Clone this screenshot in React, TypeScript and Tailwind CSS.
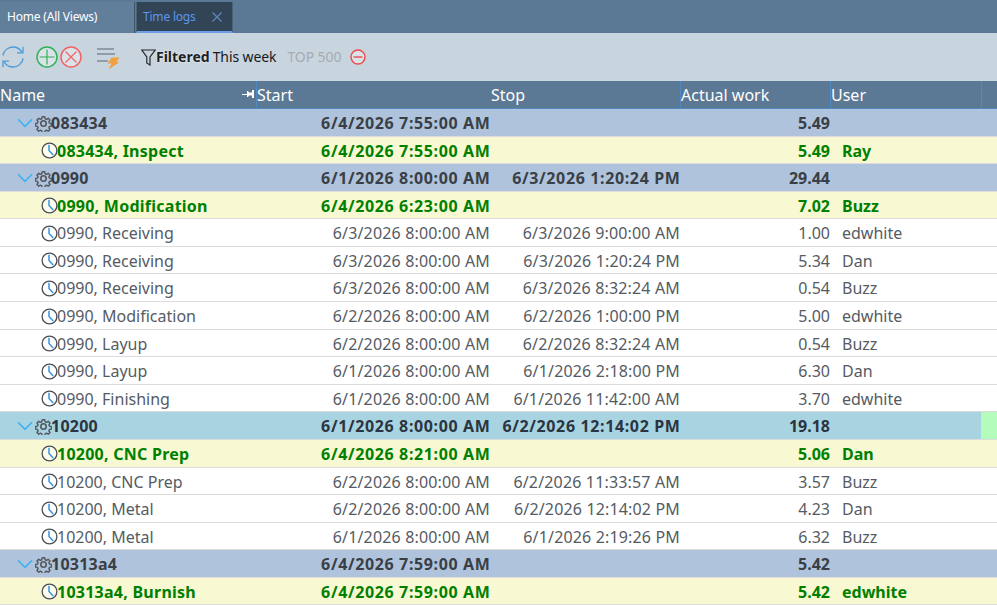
type RowKind = "group" | "groupActive" | "active" | "plain";

interface Row {
  kind: RowKind;
  name: string;
  start: string;
  stop?: string;
  work: string;
  user?: string;
}

const rows: Row[] = [
  { kind: "group", name: "083434", start: "6/4/2026 7:55:00 AM", work: "5.49" },
  { kind: "active", name: "083434, Inspect", start: "6/4/2026 7:55:00 AM", work: "5.49", user: "Ray" },
  { kind: "group", name: "0990", start: "6/1/2026 8:00:00 AM", stop: "6/3/2026 1:20:24 PM", work: "29.44" },
  { kind: "active", name: "0990, Modification", start: "6/4/2026 6:23:00 AM", work: "7.02", user: "Buzz" },
  { kind: "plain", name: "0990, Receiving", start: "6/3/2026 8:00:00 AM", stop: "6/3/2026 9:00:00 AM", work: "1.00", user: "edwhite" },
  { kind: "plain", name: "0990, Receiving", start: "6/3/2026 8:00:00 AM", stop: "6/3/2026 1:20:24 PM", work: "5.34", user: "Dan" },
  { kind: "plain", name: "0990, Receiving", start: "6/3/2026 8:00:00 AM", stop: "6/3/2026 8:32:24 AM", work: "0.54", user: "Buzz" },
  { kind: "plain", name: "0990, Modification", start: "6/2/2026 8:00:00 AM", stop: "6/2/2026 1:00:00 PM", work: "5.00", user: "edwhite" },
  { kind: "plain", name: "0990, Layup", start: "6/2/2026 8:00:00 AM", stop: "6/2/2026 8:32:24 AM", work: "0.54", user: "Buzz" },
  { kind: "plain", name: "0990, Layup", start: "6/1/2026 8:00:00 AM", stop: "6/1/2026 2:18:00 PM", work: "6.30", user: "Dan" },
  { kind: "plain", name: "0990, Finishing", start: "6/1/2026 8:00:00 AM", stop: "6/1/2026 11:42:00 AM", work: "3.70", user: "edwhite" },
  { kind: "groupActive", name: "10200", start: "6/1/2026 8:00:00 AM", stop: "6/2/2026 12:14:02 PM", work: "19.18" },
  { kind: "active", name: "10200, CNC Prep", start: "6/4/2026 8:21:00 AM", work: "5.06", user: "Dan" },
  { kind: "plain", name: "10200, CNC Prep", start: "6/2/2026 8:00:00 AM", stop: "6/2/2026 11:33:57 AM", work: "3.57", user: "Buzz" },
  { kind: "plain", name: "10200, Metal", start: "6/2/2026 8:00:00 AM", stop: "6/2/2026 12:14:02 PM", work: "4.23", user: "Dan" },
  { kind: "plain", name: "10200, Metal", start: "6/1/2026 8:00:00 AM", stop: "6/1/2026 2:19:26 PM", work: "6.32", user: "Buzz" },
  { kind: "group", name: "10313a4", start: "6/4/2026 7:59:00 AM", work: "5.42" },
  { kind: "active", name: "10313a4, Burnish", start: "6/4/2026 7:59:00 AM", work: "5.42", user: "edwhite" },
];

const rowStyles: Record<RowKind, string> = {
  group: "bg-[#afc3dd] text-[#3a3f46] font-bold",
  groupActive: "bg-[#a8d4e2] text-[#2b3440] font-bold",
  active: "bg-[#f8f9d2] text-[#008000] font-bold",
  plain: "bg-white text-[#555b63]",
};

const ClockIcon = () => (
  <svg className="h-[17px] w-[17px] shrink-0" viewBox="0 0 17 17" fill="none">
    <circle cx="8.5" cy="8.500" r="7.4" fill="#ffffff" fillOpacity="0.6" stroke="#4a4f57" strokeWidth="1.3" />
    <path d="M8 2.800V8.500L12.200 13" stroke="#3a94dc" strokeWidth="1.5" />
  </svg>
);

const GearIcon = () => (
  <svg className="h-[17px] w-[17px] shrink-0" viewBox="0 0 24 24" fill="none" stroke="#55585d" strokeWidth="2.3" strokeLinejoin="round">
    <circle cx="12" cy="12" r="3.8" />
    <path d="M10 2h4l.6 3 2.300 1 2.600-1.700 2.800 2.800-1.700 2.600 1 2.300 3 .6v4l-3 .6-1 2.300 1.700 2.600-2.800 2.800-2.600-1.700-2.300 1-.6 3h-4l-.6-3-2.300-1-2.600 1.700-2.800-2.800 1.700-2.600-1-2.300-3-.6v-4l3-.6 1-2.300-1.700-2.600 2.800-2.800 2.600 1.700 2.300-1z" transform="translate(1.300 .8) scale(.89)" />
  </svg>
);

const Chevron = () => (
  <svg className="h-[10px] w-[16px] shrink-0" viewBox="0 0 16 10" fill="none">
    <path d="M1 1.200 8 8.400 15 1.200" stroke="#3db2ee" strokeWidth="1.6" />
  </svg>
);

const RefreshIcon = () => (
  <svg className="ml-[2px] h-[22px] w-[22px]" viewBox="0 0 22 22" fill="none" stroke="#4a9bd8" strokeWidth="1.3">
    <path d="M.8 9.500C1.800 4.500 6 1 11 1c4 0 7 2.200 9 5.200" />
    <path d="M21 .8v6h-6" />
    <path d="M21.200 12.500C20.200 17.500 16 21 11 21c-4 0-7-2.200-9-5.200" />
    <path d="M1 21.200v-6h6" />
  </svg>
);

const CircleAction = ({ color, kind }: { color: string; kind: "plus" | "cross" }) => (
  <svg className="h-[22px] w-[22px]" viewBox="0 0 22 22" fill="none" stroke={color}>
    <circle cx="11" cy="11" r="10" fill="#ffffff" fillOpacity="0.35" strokeWidth="1.5" />
    {kind === "plus" ? (
      <path d="M11 3.500v15M3.500 11h15" strokeWidth="1.2" />
    ) : (
      <path d="M5.500 5.500l11 11M16.500 5.500l-11 11" strokeWidth="1.2" />
    )}
  </svg>
);

const TableRow = ({ row }: { row: Row }) => {
  const isGroup = row.kind === "group" || row.kind === "groupActive";
  const isBold = row.kind !== "plain";
  const dateSpacing = isBold ? "translate-x-[0.5px] tracking-[0.63px]" : "tracking-[0.16px]";

  return (
    <div className={`flex h-[27.59px] border-b border-[#dcdcdc] text-[16px] leading-[28px] ${rowStyles[row.kind]}`}>
      <div className={`flex h-[28px] w-[256px] items-center ${isGroup ? "pl-[17px]" : "pl-[41px]"}`}>
        {isGroup ? (
          <>
            <Chevron />
            <span className="w-[2px]" />
            <GearIcon />
          </>
        ) : (
          <ClockIcon />
        )}
        <span className={`-ml-px whitespace-nowrap ${isBold ? "tracking-[0.25px]" : ""}`}>{row.name}</span>
      </div>
      <div className={`w-[234px] whitespace-nowrap text-right ${dateSpacing}`}>{row.start}</div>
      <div className={`w-[190px] whitespace-nowrap text-right ${dateSpacing}`}>{row.stop}</div>
      <div className="w-[150px] whitespace-nowrap text-right">{row.work}</div>
      <div className="w-[151px] whitespace-nowrap pl-[12px]">{row.user}</div>
      <div className={`flex-1 ${row.kind === "groupActive" ? "bg-[#b4fcbc]" : ""}`} />
    </div>
  );
};

const App = () => {
  return (
    <div className="h-[605px] w-[997px] overflow-hidden bg-white font-['Noto_Sans','Open_Sans',sans-serif]">
      <div className="flex h-[33px] items-end bg-[#5b7895] text-[12px] leading-[30px] tracking-[-0.2px]">
        <div className="h-[31px] w-[135px] border-r border-[#3e5468] bg-[#617e9b] pl-[7px] text-white">Home (All Views)</div>
        <div className="ml-px flex h-[31px] w-[97px] items-center border-x border-[#4a6275] border-b-2 border-b-[#6f9ce8] bg-[#324557] pl-[6px] text-[#5f95ea]">
          Time logs
          <svg className="ml-[16px] h-[10px] w-[10px]" viewBox="0 0 10 10" stroke="#5f86bb" strokeWidth="1.3">
            <path d="M.5.5l9 9M9.500.5l-9 9" />
          </svg>
        </div>
      </div>

      <div className="flex h-[48px] items-center bg-[#c8d4de] text-[14px] leading-[44px]">
        <RefreshIcon />
        <div className="ml-[12px] flex gap-[2px]">
          <CircleAction color="#2fb15a" kind="plus" />
          <CircleAction color="#ef6464" kind="cross" />
        </div>
        <svg className="ml-[14px] h-[24px] w-[24px]" viewBox="0 0 24 24" fill="none">
          <path d="M1 4h17M1 9h18M1 16h11" stroke="#7f8a94" strokeWidth="1.3" />
          <path d="M15.500 12.500h8l-3 4.500h3l-11 7.500 3-6H11.500z" fill="#f0a040" />
        </svg>
        <svg className="ml-[21px] h-[17px] w-[15px]" viewBox="0 0 15 17" fill="none" stroke="#24282c" strokeWidth="1.2">
          <path d="M.8 1h13.400L9 8v8l-3.200-2V8z" />
        </svg>
        <span className="font-bold text-[#1d2125] [text-shadow:0_0_2px_white]">Filtered</span>
        <span className="ml-[3px] tracking-[-0.1px] text-[#15191d]">This week</span>
        <span className="ml-[11px] tracking-[-0.1px] text-[#a6acb2]">TOP 500</span>
        <svg className="ml-[9px] h-[16px] w-[16px]" viewBox="0 0 16 16" fill="none" stroke="#ee4b4b">
          <circle cx="8" cy="8" r="7" fill="#ffffff" fillOpacity="0.35" strokeWidth="1.4" />
          <path d="M3.500 8h9" strokeWidth="1.4" />
        </svg>
      </div>

      <div className="flex h-[28px] border-b border-[#4f8ac4] bg-[#5b7895] text-[16px] leading-[29px] text-white">
        <div className="relative w-[256px]">
          Name
          <svg className="absolute right-[1px] top-[8px] h-[11px] w-[13px]" viewBox="0 0 13 11" fill="white">
            <path d="M0 5h5V2h1l1 1.500h3V1h2v8h-2V6.500H7L6 8H5V6H0z" />
          </svg>
        </div>
        <div className="w-[234px] border-l border-[#4f8ac4]">Start</div>
        <div className="w-[190px] pl-px">Stop</div>
        <div className="w-[150px] border-l border-[#4f8ac4]">Actual work</div>
        <div className="w-[151px] border-l border-[#4f8ac4]">User</div>
        <div className="flex-1 border-l border-[#4f8ac4]" />
      </div>

      {rows.map((row, index) => (
        <TableRow key={index} row={row} />
      ))}
    </div>
  );
};

export default App;
